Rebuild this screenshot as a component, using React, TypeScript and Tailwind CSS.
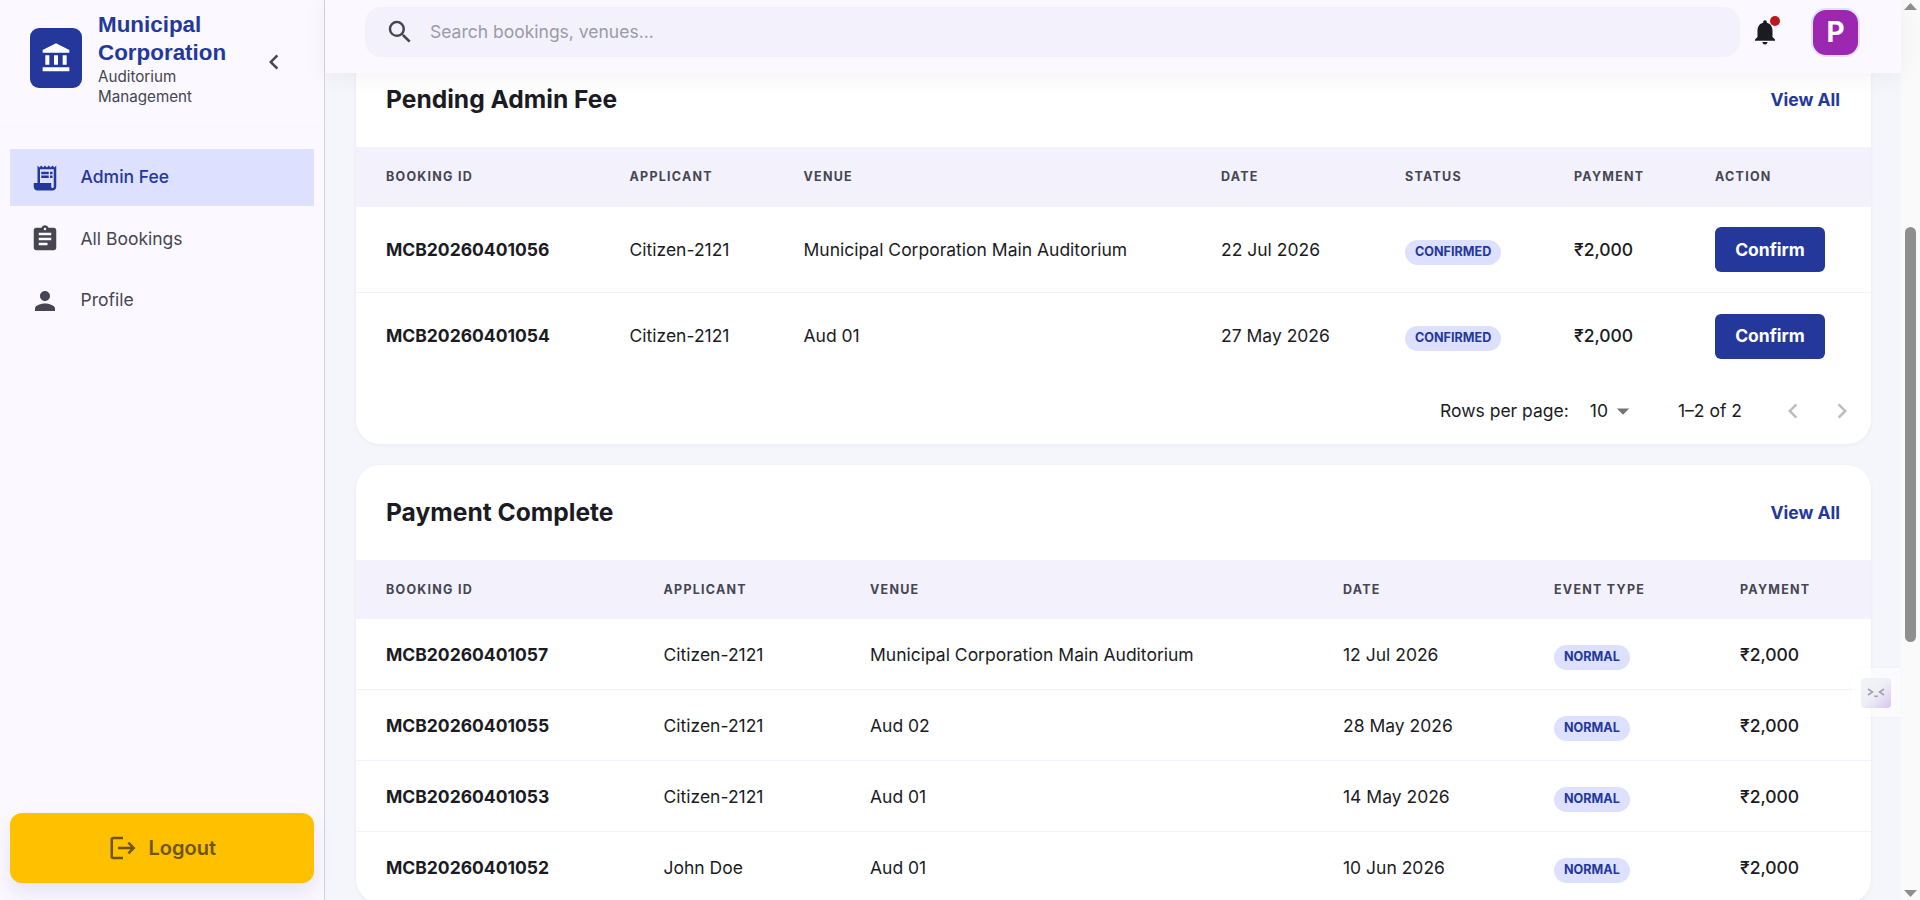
import { MdAccountBalance, MdArrowDropDown, MdAssignment, MdChevronLeft, MdChevronRight, MdLogout, MdNotifications, MdPerson, MdReceiptLong, MdSearch } from "react-icons/md";

const pending = [
  { id: "MCB20260401056", applicant: "Citizen-2121", venue: "Municipal Corporation Main Auditorium", date: "22 Jul 2026" },
  { id: "MCB20260401054", applicant: "Citizen-2121", venue: "Aud 01", date: "27 May 2026" },
];

const complete = [
  { id: "MCB20260401057", applicant: "Citizen-2121", venue: "Municipal Corporation Main Auditorium", date: "12 Jul 2026" },
  { id: "MCB20260401055", applicant: "Citizen-2121", venue: "Aud 02", date: "28 May 2026" },
  { id: "MCB20260401053", applicant: "Citizen-2121", venue: "Aud 01", date: "14 May 2026" },
  { id: "MCB20260401052", applicant: "John Doe", venue: "Aud 01", date: "10 Jun 2026" },
];

const pendingGrid = "grid grid-cols-[243.5px_174px_417.5px_184px_169px_141px_1fr] items-center px-[30px]";
const completeGrid = "grid grid-cols-[277.5px_206.5px_473px_211px_186px_1fr] items-center px-[30px]";

function Badge({ label }: { label: string }) {
  return (
    <span className="mt-[4px] inline-flex h-[25px] items-center rounded-full bg-[#dde1ff] px-[10px] text-[12.6px] font-bold text-[#24389c]">
      {label}
    </span>
  );
}

function Head({ labels, grid, height }: { labels: string[]; grid: string; height: string }) {
  return (
    <div className={`${grid} ${height} bg-[#f3f1fc] text-[12.5px] font-bold tracking-[1.25px] text-[#454652]`}>
      {labels.map((l) => (
        <div key={l}>{l}</div>
      ))}
    </div>
  );
}

function CardTitle({ title, height }: { title: string; height: string }) {
  return (
    <div className={`flex ${height} items-center justify-between pl-[30px] pr-[31px]`}>
      <h2 className="text-[24.6px] font-bold text-[#1b1b24]">{title}</h2>
      <span className="pt-[2px] text-[17.5px] font-bold text-[#24389c]">View All</span>
    </div>
  );
}

function NavItem({ icon, label, active }: { icon: React.ReactNode; label: string; active?: boolean }) {
  return (
    <div className={`flex h-[57px] items-center gap-[20.5px] pl-[20px] text-[17.5px] ${active ? "bg-[#dde1ff] font-medium text-[#24389c]" : "text-[#454652]"}`}>
      {icon}
      <span>{label}</span>
    </div>
  );
}

export default function App() {
  return (
    <div className="flex h-screen w-full overflow-hidden bg-[#f5f6fb] font-['Inter',sans-serif] text-[#1b1b24]">
      {/* Sidebar */}
      <aside className="flex h-full w-[325px] shrink-0 flex-col border-r border-[#d4d3dc] bg-[#fbf8ff]">
        <div className="flex h-[127px] shrink-0 items-center border-b border-[#f8f5fc] pb-[8px] pl-[30px] pr-[35px]">
          <div className="mb-[2px] flex h-[60px] w-[52px] shrink-0 items-center justify-center rounded-[9px] bg-[#24389c] text-white">
            <MdAccountBalance size={32} />
          </div>
          <div className="ml-[16px] flex-1">
            <div className="font-['Liberation_Sans',sans-serif] text-[22.4px] font-bold leading-[28px] text-[#24389c]">
              Municipal
              <br />
              Corporation
            </div>
            <div className="text-[15.2px] leading-[20px] text-[#454652]">
              Auditorium
              <br />
              Management
            </div>
          </div>
          <MdChevronLeft size={30} className="mt-[6px] text-[#454652]" />
        </div>
        <nav className="mt-[22px] flex flex-col gap-[4.5px] px-[10px]">
          <NavItem active icon={<MdReceiptLong size={30} />} label="Admin Fee" />
          <NavItem icon={<MdAssignment size={30} />} label="All Bookings" />
          <NavItem icon={<MdPerson size={30} />} label="Profile" />
        </nav>
        <div className="mt-auto px-[10px] pb-[17px]">
          <div className="flex h-[70px] items-center justify-center gap-[10.5px] rounded-[12px] bg-[#ffc000] text-[20px] font-semibold text-[#6d5600] shadow-[0_10px_20px_rgba(36,56,156,0.1)]">
            <MdLogout size={30} />
            <span>Logout</span>
          </div>
        </div>
      </aside>

      {/* Main column */}
      <main className="relative flex h-full min-w-0 flex-1 flex-col">
        <header className="relative z-10 flex h-[73px] shrink-0 items-center bg-[#fbf8ff] pb-[9px] pl-[40px] pr-[41px] shadow-[0_4px_24px_rgba(0,0,0,0.05)]">
          <div className="flex h-[50px] flex-1 items-center rounded-[16px] bg-[#f3f1fc] pl-[20px]">
            <MdSearch size={30} className="text-[#454652]" />
            <span className="ml-[15px] text-[17.5px] text-[#9a9aa8]">Search bookings, venues...</span>
          </div>
          <div className="relative ml-[10px] mr-[31px] flex h-[24px] w-[30px] shrink-0 items-center justify-center">
            <MdNotifications size={30} className="text-[#1b1b24]" />
            <span className="absolute right-0 top-[-4px] h-[10px] w-[10px] rounded-full bg-[#ba1a1a]" />
          </div>
          <div className="flex h-[49px] w-[49px] shrink-0 items-center justify-center rounded-[15px] border-2 border-[#dde1ff] bg-[#9c27b0] text-[28px] font-bold text-white">
            P
          </div>
        </header>

        <div className="mt-[-22px] flex min-h-0 flex-1 flex-col gap-[21px] overflow-hidden pl-[31px] pr-[30px]">
          <section className="shrink-0 overflow-hidden rounded-[24px] bg-white shadow-[0_1px_4px_rgba(0,0,0,0.05)]">
            <CardTitle title="Pending Admin Fee" height="h-[96px]" />
            <Head labels={["BOOKING ID", "APPLICANT", "VENUE", "DATE", "STATUS", "PAYMENT", "ACTION"]} grid={pendingGrid} height="h-[60px]" />
            {pending.map((r, i) => (
              <div key={r.id} className={`${pendingGrid} h-[86px] pt-[1px] text-[17.5px] ${i === 0 ? "border-b border-[#f3f1fc]" : ""}`}>
                <div className="font-bold">{r.id}</div>
                <div>{r.applicant}</div>
                <div>{r.venue}</div>
                <div>{r.date}</div>
                <div><Badge label="CONFIRMED" /></div>
                <div className="font-medium">₹2,000</div>
                <div>
                  <div className="mt-[-1px] flex h-[45px] w-[110px] items-center justify-center rounded-[6px] bg-[#24389c] pt-[1px] font-bold text-white">Confirm</div>
                </div>
              </div>
            ))}
            <div className="flex h-[65px] items-center pb-[1px] pl-[1084px] text-[17.5px]">
              <span>Rows per page:</span>
              <span className="ml-[21px]">10</span>
              <MdArrowDropDown size={30} className="text-[#757575]" />
              <span className="ml-[40px]">1–2 of 2</span>
              <MdChevronLeft size={30} className="ml-[36.5px] text-[#bdbdbd]" />
              <MdChevronRight size={30} className="ml-[19px] text-[#bdbdbd]" />
            </div>
          </section>

          <section className="shrink-0 overflow-hidden rounded-[24px] bg-white shadow-[0_1px_4px_rgba(0,0,0,0.05)]">
            <CardTitle title="Payment Complete" height="h-[95px]" />
            <Head labels={["BOOKING ID", "APPLICANT", "VENUE", "DATE", "EVENT TYPE", "PAYMENT"]} grid={`${completeGrid} pt-[1px]`} height="h-[59px]" />
            {complete.map((r) => (
              <div key={r.id} className={`${completeGrid} h-[71px] border-b border-[#f3f1fc] pt-[3px] text-[17.5px]`}>
                <div className="font-bold">{r.id}</div>
                <div>{r.applicant}</div>
                <div>{r.venue}</div>
                <div>{r.date}</div>
                <div><Badge label="NORMAL" /></div>
                <div className="font-medium">₹2,000</div>
              </div>
            ))}
          </section>
        </div>

        {/* Floating widget */}
        <div className="absolute right-0 top-[668px] z-20 flex h-[49px] w-[50px] items-center justify-center rounded-l-[10px] bg-white/60 shadow-[0_0_3px_rgba(0,0,0,0.03)]">
          <div className="flex h-[30px] w-[30px] items-center justify-center rounded-[4px] bg-gradient-to-br from-[#f3f4f8] via-[#eeeff6] to-[#d9c4f0]">
            <svg width="20" height="12" viewBox="0 0 20 12" fill="none" stroke="#a0a2ad" strokeWidth="1.6">
              <path d="M2 2l4.5 3L2 8" />
              <path d="M18 2l-4.5 3L18 8" />
              <path d="M8.5 8.5a1.6 1.6 0 0 0 3 0" />
            </svg>
          </div>
        </div>
      </main>

      {/* Scrollbar */}
      <div className="flex h-full w-[19px] shrink-0 flex-col items-center justify-between bg-[#fafafa] py-[3px]">
        <svg width="13" height="7" viewBox="0 0 13 7"><path d="M6.5 0L13 7H0z" fill="#8f8f8f" /></svg>
        <div className="mb-[248px] mt-[217px] w-[11px] flex-1 rounded-full bg-[#8f8f8f]" />
        <svg width="13" height="7" viewBox="0 0 13 7"><path d="M6.5 7L13 0H0z" fill="#8f8f8f" /></svg>
      </div>
    </div>
  );
}
